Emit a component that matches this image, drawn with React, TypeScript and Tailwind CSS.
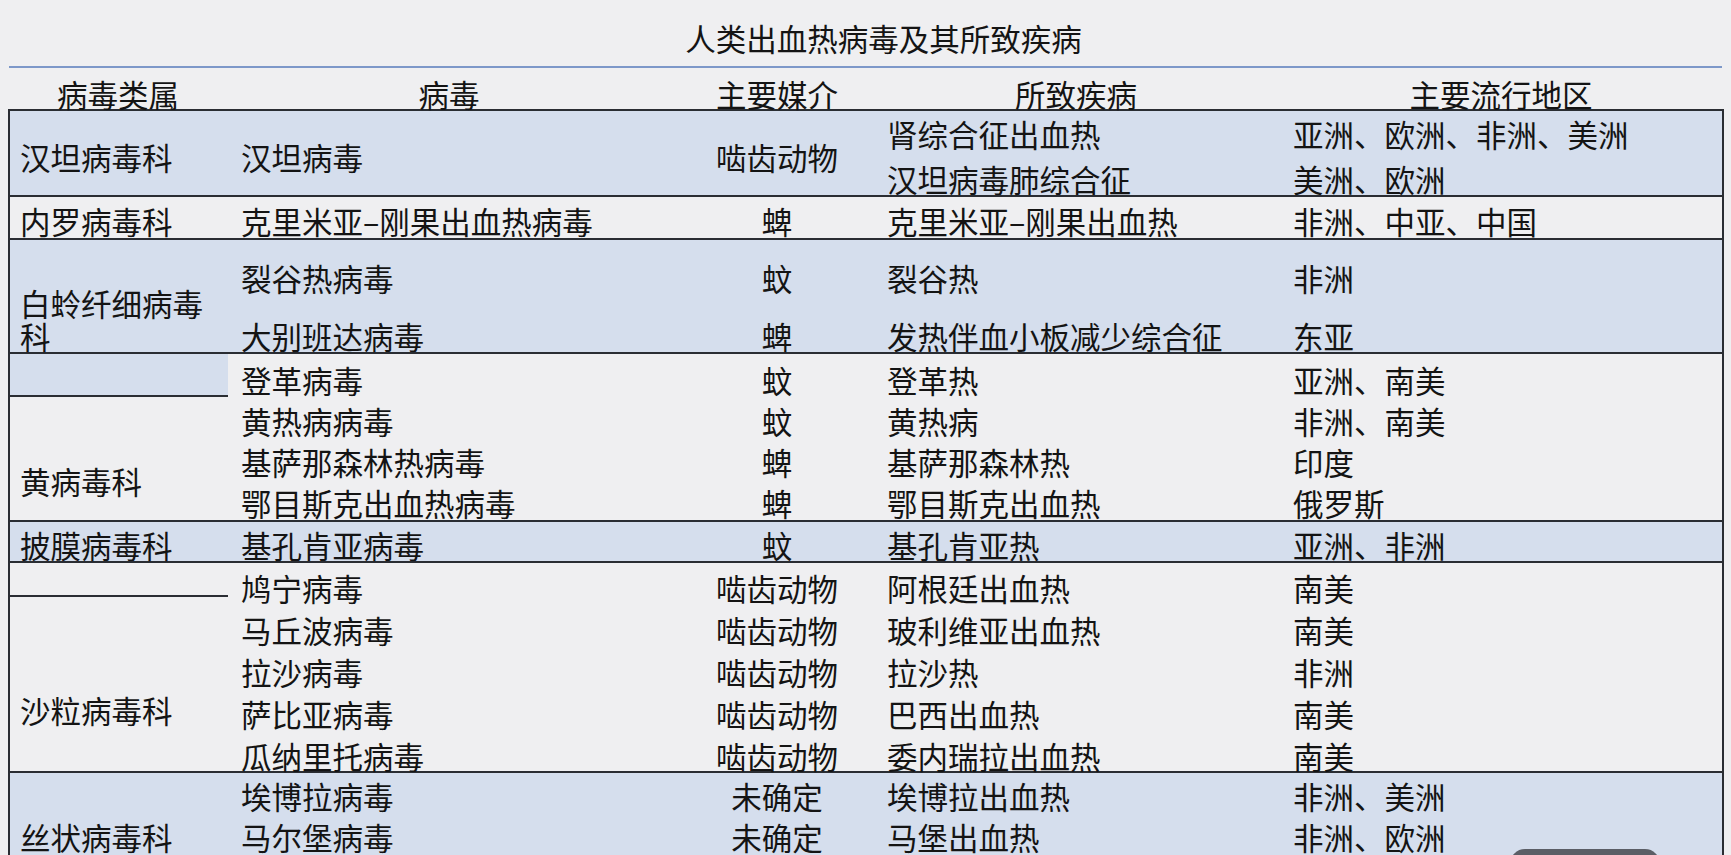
import React from "react";

interface GroupProps {
  cls: string;
  c1: React.ReactNode;
  c2: React.ReactNode;
  c3: React.ReactNode;
  c4: React.ReactNode;
  c5: React.ReactNode;
}

const Group: React.FC<GroupProps> = ({ cls, c1, c2, c3, c4, c5 }) => {
  return (
    <div className={`flex border-b-2 border-[#2a2d33] ${cls}`}>
      <div className="w-[218px] shrink-0">{c1}</div>
      <div className="w-[442px] shrink-0 pl-[13px]">{c2}</div>
      <div className="w-[214px] shrink-0 text-center">{c3}</div>
      <div className="w-[384px] shrink-0 pl-[3px]">{c4}</div>
      <div className="w-[454px] shrink-0 pl-[25px]">{c5}</div>
    </div>
  );
};

const Lines = ({ items, cls }: { items: string[]; cls: string }) => (
  <div className={cls}>
    {items.map((t, i) => (
      <div key={i} className="whitespace-nowrap">
        {t}
      </div>
    ))}
  </div>
);

export default function App() {
  return (
    <div className="relative h-[855px] overflow-hidden bg-[#efeff1] text-[30.5px] text-[#141414] font-['Noto_Sans_CJK_SC','Noto_Sans',sans-serif]">
      {/* title */}
      <div className="h-[66px] pt-[18px] pl-[36px] text-center leading-[40px]">
        人类出血热病毒及其所致疾病
      </div>
      <div className="ml-[9px] w-[1713px] h-[2px] bg-[#7d98c9]" />

      {/* header */}
      <div className="ml-[8px] w-[1716px] flex h-[41px] pt-[6px] leading-[40px]">
        <div className="w-[220px] shrink-0 text-center">病毒类属</div>
        <div className="w-[442px] shrink-0 text-center">病毒</div>
        <div className="w-[214px] shrink-0 text-center">主要媒介</div>
        <div className="w-[384px] shrink-0 text-center">所致疾病</div>
        <div className="w-[456px] shrink-0 text-center pl-[10px]">主要流行地区</div>
      </div>

      {/* table */}
      <div className="ml-[8px] w-[1716px] border-x-2 border-t-2 border-[#2a2d33]">
        <Group
          cls="h-[86px] bg-[#d5deed]"
          c1={<div className="pl-[10px] pt-[26px] leading-[40px]">汉坦病毒科</div>}
          c2={<div className="pt-[26px] leading-[40px]">汉坦病毒</div>}
          c3={<div className="pt-[26px] leading-[40px]">啮齿动物</div>}
          c4={<Lines cls="pt-[1px] leading-[45px]" items={["肾综合征出血热", "汉坦病毒肺综合征"]} />}
          c5={<Lines cls="pt-[1px] leading-[45px]" items={["亚洲、欧洲、非洲、美洲", "美洲、欧洲"]} />}
        />
        <Group
          cls="h-[43px]"
          c1={<div className="pl-[10px] pt-[4px] leading-[40px]">内罗病毒科</div>}
          c2={<div className="pt-[4px] leading-[40px] whitespace-nowrap">克里米亚–刚果出血热病毒</div>}
          c3={<div className="pt-[4px] leading-[40px]">蜱</div>}
          c4={<div className="pt-[4px] leading-[40px]">克里米亚–刚果出血热</div>}
          c5={<div className="pt-[4px] leading-[40px]">非洲、中亚、中国</div>}
        />
        <Group
          cls="h-[114px] bg-[#d5deed]"
          c1={<div className="pl-[10px] pr-[10px] pt-[47px] leading-[33px]">白蛉纤细病毒科</div>}
          c2={<Lines cls="pt-[9px] leading-[58px]" items={["裂谷热病毒", "大别班达病毒"]} />}
          c3={<Lines cls="pt-[9px] leading-[58px]" items={["蚊", "蜱"]} />}
          c4={<Lines cls="pt-[9px] leading-[58px]" items={["裂谷热", "发热伴血小板减少综合征"]} />}
          c5={<Lines cls="pt-[9px] leading-[58px]" items={["非洲", "东亚"]} />}
        />
        <Group
          cls="h-[168px]"
          c1={
            <div>
              <div className="h-[43px] bg-[#d5deed] border-b-2 border-[#2a2d33]" />
              <div className="pl-[10px] pt-[64px] leading-[40px]">黄病毒科</div>
            </div>
          }
          c2={
            <Lines
              cls="pt-[6px] leading-[41px]"
              items={["登革病毒", "黄热病病毒", "基萨那森林热病毒", "鄂目斯克出血热病毒"]}
            />
          }
          c3={<Lines cls="pt-[6px] leading-[41px]" items={["蚊", "蚊", "蜱", "蜱"]} />}
          c4={
            <Lines
              cls="pt-[6px] leading-[41px]"
              items={["登革热", "黄热病", "基萨那森林热", "鄂目斯克出血热"]}
            />
          }
          c5={
            <Lines
              cls="pt-[6px] leading-[41px]"
              items={["亚洲、南美", "非洲、南美", "印度", "俄罗斯"]}
            />
          }
        />
        <Group
          cls="h-[41px] bg-[#d5deed]"
          c1={<div className="pl-[10px] pt-[3px] leading-[40px]">披膜病毒科</div>}
          c2={<div className="pt-[3px] leading-[40px]">基孔肯亚病毒</div>}
          c3={<div className="pt-[3px] leading-[40px]">蚊</div>}
          c4={<div className="pt-[3px] leading-[40px]">基孔肯亚热</div>}
          c5={<div className="pt-[3px] leading-[40px]">亚洲、非洲</div>}
        />
        <Group
          cls="h-[210px]"
          c1={
            <div>
              <div className="h-[34px] border-b-2 border-[#2a2d33]" />
              <div className="pl-[10px] pt-[93px] leading-[40px]">沙粒病毒科</div>
            </div>
          }
          c2={
            <Lines
              cls="pt-[4px] leading-[42px]"
              items={["鸠宁病毒", "马丘波病毒", "拉沙病毒", "萨比亚病毒", "瓜纳里托病毒"]}
            />
          }
          c3={
            <Lines
              cls="pt-[4px] leading-[42px]"
              items={["啮齿动物", "啮齿动物", "啮齿动物", "啮齿动物", "啮齿动物"]}
            />
          }
          c4={
            <Lines
              cls="pt-[4px] leading-[42px]"
              items={["阿根廷出血热", "玻利维亚出血热", "拉沙热", "巴西出血热", "委内瑞拉出血热"]}
            />
          }
          c5={
            <Lines
              cls="pt-[4px] leading-[42px]"
              items={["南美", "南美", "非洲", "南美", "南美"]}
            />
          }
        />
        <Group
          cls="h-[120px] bg-[#d5deed]"
          c1={<div className="pl-[10px] pt-[44px] leading-[40px]">丝状病毒科</div>}
          c2={<Lines cls="pt-[3px] leading-[41px]" items={["埃博拉病毒", "马尔堡病毒"]} />}
          c3={<Lines cls="pt-[3px] leading-[41px]" items={["未确定", "未确定"]} />}
          c4={<Lines cls="pt-[3px] leading-[41px]" items={["埃博拉出血热", "马堡出血热"]} />}
          c5={<Lines cls="pt-[3px] leading-[41px]" items={["非洲、美洲", "非洲、欧洲"]} />}
        />
      </div>

      {/* player control peeking from the bottom edge */}
      <div className="absolute left-[1510px] top-[849px] w-[150px] h-[30px] rounded-full bg-[#5b5e66]" />
    </div>
  );
}
